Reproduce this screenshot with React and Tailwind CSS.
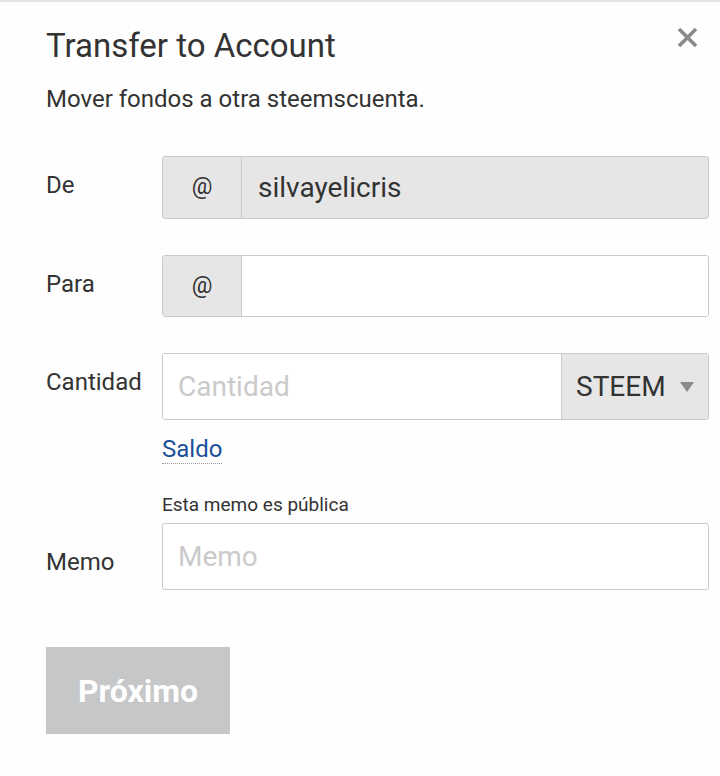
import React from 'react';

const font = { fontFamily: 'Roboto, "Liberation Sans", sans-serif' };

function Label({ children, className = '' }) {
    return <div className={'w-[116px] shrink-0 text-[24px] leading-[28px] text-[#333] ' + className}>{children}</div>;
}

function AtAddon({ children }) {
    return (
        <div className="w-[79px] shrink-0 flex items-center justify-center bg-[#e6e6e6] border-r border-[#cacaca] text-[23px] text-[#333]">
            {children}
        </div>
    );
}

export default function App() {
    return (
        <div style={font} className="min-h-[776px] w-[720px] bg-[#fefefe] border-t-2 border-[#e4e4e4] text-[#333]">
            <div className="pl-[46px] pr-[11px] pt-[22px]">
                <div className="flex justify-between items-start">
                    <h2 className="text-[33px] leading-[44px] font-normal">Transfer to Account</h2>
                    <button className="mt-[3px] mr-[11px] w-[21px] h-[21px] text-[#8a8a8a]">
                        <svg viewBox="0 0 21 21" width="21" height="21">
                            <path d="M2 2 L19 19 M19 2 L2 19" stroke="currentColor" strokeWidth="3.6" />
                        </svg>
                    </button>
                </div>
                <p className="mt-[16px] text-[24px] leading-[30px]">Mover fondos a otra steemscuenta.</p>

                <div className="mt-[42px] flex">
                    <Label className="pt-[15px]">De</Label>
                    <div className="flex-1 flex h-[63px] border border-[#cacaca] rounded-[3px] bg-[#e6e6e6] overflow-hidden">
                        <AtAddon>@</AtAddon>
                        <div className="flex-1 flex items-center pl-[16px] text-[28px]">silvayelicris</div>
                    </div>
                </div>

                <div className="mt-[36px] flex">
                    <Label className="pt-[15px]">Para</Label>
                    <div className="flex-1 flex h-[62px] border border-[#cacaca] rounded-[3px] bg-white overflow-hidden">
                        <AtAddon>@</AtAddon>
                        <input className="flex-1 outline-none px-[16px] text-[28px] bg-white" />
                    </div>
                </div>

                <div className="mt-[36px] flex">
                    <Label className="pt-[15px]">Cantidad</Label>
                    <div className="flex-1">
                        <div className="flex h-[67px] border border-[#cacaca] rounded-[3px] bg-white overflow-hidden">
                            <input placeholder="Cantidad" className="flex-1 min-w-0 outline-none px-[15px] text-[28px] bg-white placeholder:text-[#cacaca]" />
                            <div className="w-[147px] shrink-0 flex items-center bg-[#e6e6e6] border-l border-[#cacaca] pl-[14px] text-[28px]">
                                <span>STEEM</span>
                                <svg className="ml-[14px]" width="14" height="10" viewBox="0 0 14 10">
                                    <path d="M0 0 H14 L7 10 Z" fill="#8a8a8a" />
                                </svg>
                            </div>
                        </div>
                        <div className="mt-[15px] flex">
                            <span className="text-[24px] leading-[28px] text-[#1a5099] border-b border-dotted border-[#999]">Saldo</span>
                        </div>
                    </div>
                </div>

                <div className="mt-[30px] flex">
                    <Label className="pt-[54px]">Memo</Label>
                    <div className="flex-1">
                        <div className="text-[19px] leading-[22px]">Esta memo es pública</div>
                        <input placeholder="Memo" className="mt-[7px] w-full h-[67px] border border-[#cacaca] rounded-[3px] bg-white outline-none px-[15px] text-[28px] placeholder:text-[#cacaca]" />
                    </div>
                </div>

                <button disabled className="mt-[57px] w-[184px] h-[87px] bg-[#c6c7c9] text-white text-[32px] font-bold">Próximo</button>
            </div>
        </div>
    );
}
